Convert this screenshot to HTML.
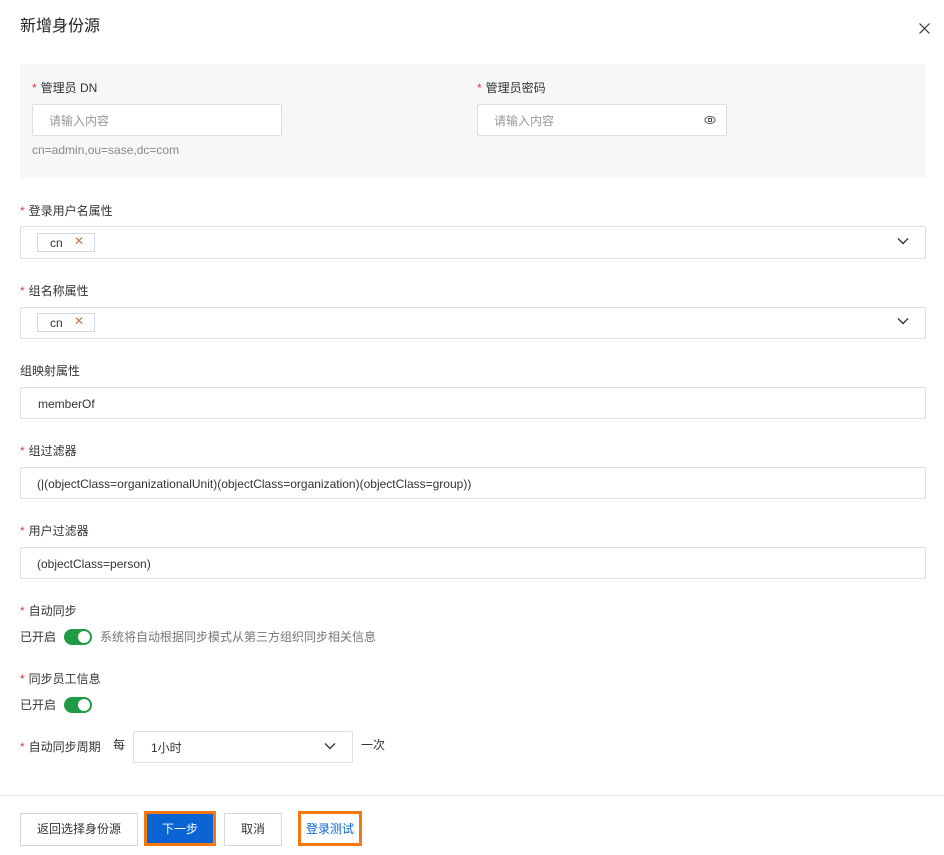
<!DOCTYPE html>
<html><head><meta charset="utf-8"><style>
*{box-sizing:border-box;margin:0;padding:0}
body{width:944px;height:855px;background:#fff;font-family:"Liberation Sans","Noto Sans CJK SC",sans-serif;font-size:12px;color:#333;position:relative;overflow:hidden}
.a{position:absolute;white-space:nowrap}
.lab{position:absolute;line-height:16px;color:#333}
.lab b{color:#e5363a;font-weight:normal;margin-right:4px}
.box{position:absolute;border:1px solid #dcdfe4;background:#fff;border-radius:2px}
.ph{color:#999}
.tag{position:absolute;border:1px solid #d8d8d8;background:#fff;height:19px;width:58px;line-height:19px;padding-left:12px;font-size:12px}
.tag span{position:absolute;left:36px;top:-2px;color:#c0754a;font-size:12px}
.chev{position:absolute;width:14px;height:14px}
.tog{position:absolute;width:28px;height:16px;border-radius:8px;background:#1f9a45}
.tog:after{content:"";position:absolute;right:2px;top:2px;width:12px;height:12px;border-radius:50%;background:#fff}
.btn{position:absolute;height:33px;border:1px solid #d5d8dd;background:#fff;text-align:center;line-height:31px;color:#333}
</style></head><body>
<div class="a" style="left:20px;top:17px;font-size:16px;line-height:20px;color:#222">新增身份源</div>
<svg class="a" style="left:919px;top:23px" width="11" height="11" viewBox="0 0 11 11"><path d="M0.5 0.5L10.5 10.5M10.5 0.5L0.5 10.5" stroke="#333" stroke-width="1.2"/></svg>

<div class="a" style="left:20px;top:64px;width:906px;height:114px;background:#f6f7f9"></div>
<div class="lab" style="left:32px;top:80px"><b>*</b>管理员 DN</div>
<div class="box" style="left:32px;top:104px;width:250px;height:32px;line-height:32px;padding-left:16px"><span class="ph">请输入内容</span></div>
<div class="a" style="left:32px;top:143px;color:#888;line-height:14px">cn=admin,ou=sase,dc=com</div>
<div class="lab" style="left:477px;top:80px"><b>*</b>管理员密码</div>
<div class="box" style="left:477px;top:104px;width:250px;height:32px;line-height:32px;padding-left:16px"><span class="ph">请输入内容</span>
<svg class="a" style="left:226px;top:9px" width="12" height="12" viewBox="0 0 12 12"><ellipse cx="6" cy="6" rx="5" ry="3.5" fill="none" stroke="#556" stroke-width="1"/><rect x="4.5" y="4.5" width="3" height="3" fill="none" stroke="#556" stroke-width="1"/></svg></div>

<div class="lab" style="left:20px;top:203px"><b>*</b>登录用户名属性</div>
<div class="box" style="left:20px;top:226px;width:906px;height:33px"></div>
<div class="tag" style="left:37px;top:233px">cn<span>✕</span></div>
<svg class="chev" style="left:896px;top:234px" viewBox="0 0 14 14"><path d="M2 4.5L7 9.5L12 4.5" fill="none" stroke="#333" stroke-width="1.4"/></svg>

<div class="lab" style="left:20px;top:283px"><b>*</b>组名称属性</div>
<div class="box" style="left:20px;top:307px;width:906px;height:32px"></div>
<div class="tag" style="left:37px;top:313px">cn<span>✕</span></div>
<svg class="chev" style="left:896px;top:314px" viewBox="0 0 14 14"><path d="M2 4.5L7 9.5L12 4.5" fill="none" stroke="#333" stroke-width="1.4"/></svg>

<div class="lab" style="left:20px;top:363px">组映射属性</div>
<div class="box" style="left:20px;top:387px;width:906px;height:32px;line-height:32px;padding-left:17px">memberOf</div>

<div class="lab" style="left:20px;top:443px"><b>*</b>组过滤器</div>
<div class="box" style="left:20px;top:467px;width:906px;height:32px;line-height:32px;padding-left:16px">(|(objectClass=organizationalUnit)(objectClass=organization)(objectClass=group))</div>

<div class="lab" style="left:20px;top:523px"><b>*</b>用户过滤器</div>
<div class="box" style="left:20px;top:547px;width:906px;height:32px;line-height:32px;padding-left:16px">(objectClass=person)</div>

<div class="lab" style="left:20px;top:603px"><b>*</b>自动同步</div>
<div class="a" style="left:20px;top:629px;line-height:16px">已开启</div>
<div class="tog" style="left:64px;top:629px"></div>
<div class="a" style="left:100px;top:629px;line-height:16px;color:#777">系统将自动根据同步模式从第三方组织同步相关信息</div>

<div class="lab" style="left:20px;top:671px"><b>*</b>同步员工信息</div>
<div class="a" style="left:20px;top:697px;line-height:16px">已开启</div>
<div class="tog" style="left:64px;top:697px"></div>

<div class="lab" style="left:20px;top:739px"><b>*</b>自动同步周期</div>
<div class="a" style="left:113px;top:737px;line-height:16px">每</div>
<div class="box" style="left:133px;top:731px;width:220px;height:32px;line-height:32px;padding-left:17px">1小时</div>
<svg class="chev" style="left:323px;top:739px" viewBox="0 0 14 14"><path d="M2 4.5L7 9.5L12 4.5" fill="none" stroke="#333" stroke-width="1.4"/></svg>
<div class="a" style="left:361px;top:737px;line-height:16px">一次</div>

<div class="a" style="left:0;top:795px;width:944px;height:1px;background:#e6e8eb"></div>
<div class="btn" style="left:20px;top:813px;width:118px">返回选择身份源</div>
<div class="a" style="left:144px;top:811px;width:72px;height:35px;border:3px solid #f5780f;background:#0a64d4;color:#fff;text-align:center;line-height:31px">下一步</div>
<div class="btn" style="left:224px;top:813px;width:58px">取消</div>
<div class="a" style="left:298px;top:811px;width:64px;height:35px;border:3px solid #f5780f;background:#fff;color:#0a64d4;text-align:center;line-height:31px">登录测试</div>
</body></html>
